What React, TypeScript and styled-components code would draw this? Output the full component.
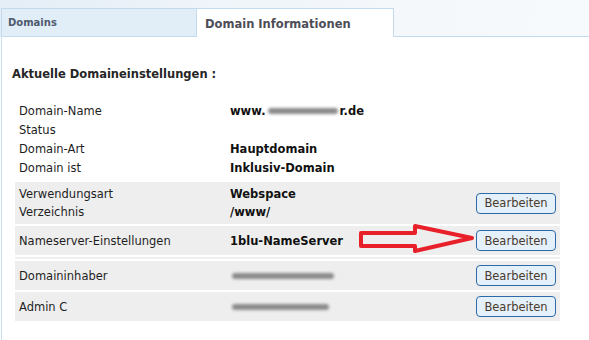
import React from 'react';
import styled, { createGlobalStyle } from 'styled-components';

const GlobalStyle = createGlobalStyle`
  html, body {
    margin: 0;
    padding: 0;
    background: #fff;
  }
  body {
    font-family: 'DejaVu Sans', Verdana, sans-serif;
    font-size: 11.5px;
    color: #1e1e1e;
  }
  * {
    box-sizing: border-box;
  }
`;

type Row = { label: string; value?: React.ReactNode };

const Smudge = ({ width }: { width: number }) => <Blur style={{ width }} />;

const generalRows: Row[] = [
  {
    label: 'Domain-Name',
    value: (
      <>
        www.
        <Smudge width={70} />
        r.de
      </>
    ),
  },
  { label: 'Status' },
  { label: 'Domain-Art', value: 'Hauptdomain' },
  { label: 'Domain ist', value: 'Inklusiv-Domain' },
];

const App = () => {
  return (
    <>
      <GlobalStyle />
      <Page>
        <TabBar>
          <Tab>Domains</Tab>
          <ActiveTab>Domain Informationen</ActiveTab>
          <TabFiller />
        </TabBar>
        <Content>
          <Heading>Aktuelle Domaineinstellungen :</Heading>
          <List>
            <Section>
              <Lines>
                {generalRows.map((row) => (
                  <Line key={row.label} tall>
                    <Label>{row.label}</Label>
                    <Value>{row.value}</Value>
                  </Line>
                ))}
              </Lines>
            </Section>

            <Section shaded>
              <Lines>
                <Line>
                  <Label>Verwendungsart</Label>
                  <Value>Webspace</Value>
                </Line>
                <Line>
                  <Label>Verzeichnis</Label>
                  <Value>/www/</Value>
                </Line>
              </Lines>
              <EditButton>Bearbeiten</EditButton>
            </Section>

            <Section shaded marked>
              <Lines>
                <Line>
                  <Label>Nameserver-Einstellungen</Label>
                  <Value>1blu-NameServer</Value>
                </Line>
              </Lines>
              <EditButton>Bearbeiten</EditButton>
              <Arrow width="140" height="40" viewBox="0 0 140 40">
                <polygon
                  points="21,13 75,13 75,6 132,18 75,31 75,26 21,26"
                  fill="none"
                  stroke="#e8202a"
                  strokeWidth="4"
                  strokeLinejoin="round"
                />
              </Arrow>
            </Section>

            <Separator />

            <Section shaded>
              <Lines>
                <Line>
                  <Label>Domaininhaber</Label>
                  <Value>
                    <Smudge width={102} />
                  </Value>
                </Line>
              </Lines>
              <EditButton>Bearbeiten</EditButton>
            </Section>

            <Section shaded>
              <Lines>
                <Line>
                  <Label>Admin C</Label>
                  <Value>
                    <Smudge width={97} />
                  </Value>
                </Line>
              </Lines>
              <EditButton>Bearbeiten</EditButton>
            </Section>
          </List>
        </Content>
      </Page>
    </>
  );
};

const Page = styled.div`
  width: 589px;
  height: 340px;
  display: flex;
  flex-direction: column;
  overflow: hidden;
`;

const TabBar = styled.div`
  height: 37px;
  padding-top: 8px;
  display: flex;
  align-items: flex-end;
  background: linear-gradient(100deg, #e4edf6 0%, #eef4f9 35%, #f5f8fb 70%, #f7fafc 100%);
`;

const Tab = styled.div`
  margin-left: 1px;
  width: 195px;
  height: 29px;
  display: flex;
  align-items: center;
  padding-left: 6px;
  background: #e1edf7;
  border: 1px solid #c3dbee;
  border-right: none;
  font-size: 10px;
  font-weight: 700;
  color: #4f5a70;
`;

const ActiveTab = styled.div`
  width: 198px;
  height: 29px;
  display: flex;
  align-items: center;
  padding: 1px 0 0 8px;
  background: #fff;
  border: 1px solid #c3dbee;
  border-bottom: none;
  font-size: 11.5px;
  font-weight: 700;
  color: #4d4d57;
`;

const TabFiller = styled.div`
  flex: 1;
  align-self: stretch;
  border-bottom: 1px solid #c3dbee;
`;

const Content = styled.div`
  flex: 1;
  margin-left: 1px;
  border-left: 1px solid #c8def0;
  padding-top: 30px;
  background: #fff;
`;

const Heading = styled.div`
  padding-left: 10px;
  line-height: 15px;
  font-weight: 700;
  color: #262626;
`;

const List = styled.div`
  margin: 19px 0 0 13px;
  width: 545px;
  display: flex;
  flex-direction: column;
  gap: 2px;

  & > :first-child {
    margin-bottom: 3px;
  }
`;

const Section = styled.div<{ shaded?: boolean; marked?: boolean }>`
  position: ${({ marked }) => (marked ? 'relative' : 'static')};
  display: flex;
  align-items: center;
  min-height: ${({ shaded }) => (shaded ? '29px' : '0')};
  padding: ${({ shaded }) => (shaded ? '3px 4px' : '0 4px')};
  background: ${({ shaded }) => (shaded ? '#eeeeee' : 'transparent')};
`;

const Lines = styled.div`
  flex: 1;
  display: flex;
  flex-direction: column;
`;

const Line = styled.div<{ tall?: boolean }>`
  display: grid;
  grid-template-columns: 211px 1fr;
  align-items: center;
  height: ${({ tall }) => (tall ? '19px' : '18px')};
`;

const Label = styled.div`
  color: #1e1e1e;
  white-space: nowrap;
`;

const Value = styled.div`
  display: flex;
  align-items: center;
  font-weight: 700;
  color: #111;
  white-space: nowrap;
`;

const Blur = styled.span`
  display: inline-block;
  height: 6px;
  margin: 0 2px;
  border-radius: 3px;
  background: #8a8a8a;
  filter: blur(1.5px);
`;

const EditButton = styled.button`
  width: 80px;
  height: 21px;
  padding: 0;
  border: 1px solid #2f6aa8;
  border-radius: 4px;
  background: #e4f0fa;
  font-family: 'DejaVu Sans', Verdana, sans-serif;
  font-size: 11.5px;
  color: #4b3a2e;
`;

const Arrow = styled.svg`
  position: absolute;
  left: 325px;
  top: -6px;
  pointer-events: none;
`;

const Separator = styled.div`
  height: 2px;
  background: #eeeeee;
`;

export default App;
